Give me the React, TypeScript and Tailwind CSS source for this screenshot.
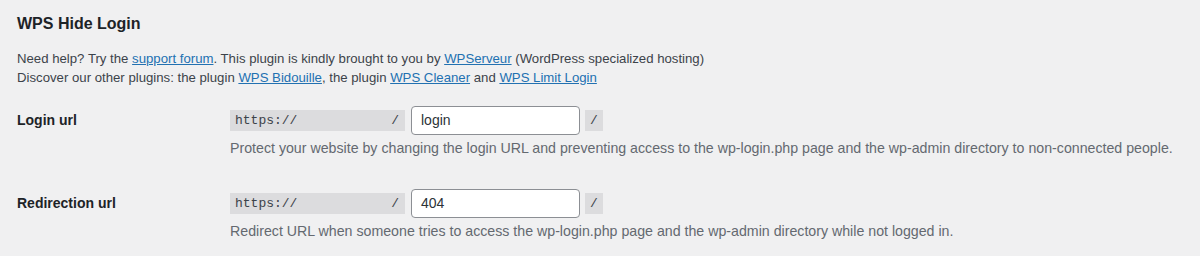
export default function App() {
  const sans = "font-['Liberation_Sans',Arial,sans-serif]";
  const mono = "font-['Liberation_Mono','DejaVu_Sans_Mono',monospace]";

  const rows = [
    {
      label: "Login url",
      value: "login",
      help: "Protect your website by changing the login URL and preventing access to the wp-login.php page and the wp-admin directory to non-connected people.",
    },
    {
      label: "Redirection url",
      value: "404",
      help: "Redirect URL when someone tries to access the wp-login.php page and the wp-admin directory while not logged in.",
    },
  ];

  return (
    <main className={`bg-[#f0f0f1] w-[1200px] h-[256px] overflow-hidden ${sans} text-[13px] text-[#3c434a]`}>
      <div className="px-[17px] pt-[14px]">
        {/* TITLE */}
        <h2 className="text-[16px] leading-[20px] font-semibold text-[#1d2327]">WPS Hide Login</h2>

        {/* INTRO */}
        <div className="mt-[15px] leading-[19px] text-[13.2px]">
          <p>
            Need help? Try the <a className="text-[#2271b1] underline">support forum</a>. This plugin is kindly brought to you by{" "}
            <a className="text-[#2271b1] underline">WPServeur</a> (WordPress specialized hosting)
          </p>
          <p>
            Discover our other plugins: the plugin <a className="text-[#2271b1] underline">WPS Bidouille</a>, the plugin{" "}
            <a className="text-[#2271b1] underline">WPS Cleaner</a> and <a className="text-[#2271b1] underline">WPS Limit Login</a>
          </p>
        </div>

        {/* SETTINGS */}
        <div className="mt-[19px] flex flex-col gap-[31px]">
          {rows.map((row) => (
            <div key={row.label} className="flex">
              <div className="w-[213px] shrink-0 h-[29px] flex items-center text-[14px] font-semibold text-[#1d2327]">
                {row.label}
              </div>
              <div>
                <div className="flex items-center">
                  <code className={`w-[175px] h-[21px] bg-[#dcdcde] flex items-center justify-between pl-[5px] pr-[6px] ${mono} text-[13px] text-[#3c434a]`}>
                    <span>https://</span>
                    <span>/</span>
                  </code>
                  <div className="ml-[6px] w-[169px] h-[29px] bg-white border border-[#8c8f94] rounded-[4px] flex items-center px-[9px] text-[14px] text-[#2c3338]">
                    {row.value}
                  </div>
                  <code className={`ml-[5px] w-[18px] h-[21px] bg-[#dcdcde] flex items-center justify-center ${mono} text-[13px]`}>/</code>
                </div>
                <p className="mt-[4px] leading-[19px] text-[14.2px] text-[#646970]">{row.help}</p>
              </div>
            </div>
          ))}
        </div>
      </div>
    </main>
  );
}
